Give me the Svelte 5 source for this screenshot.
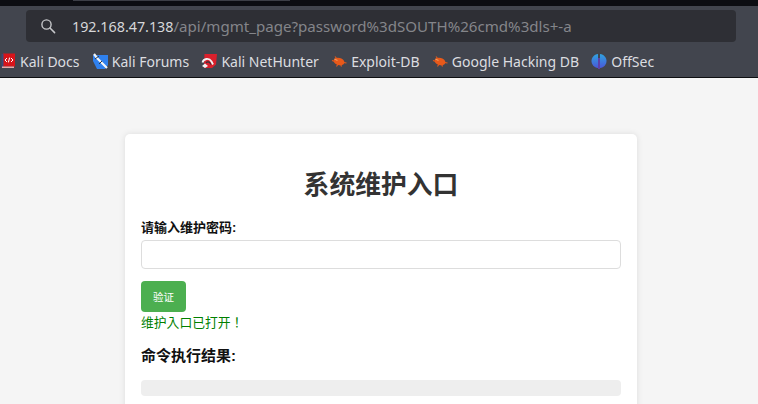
<script>
  const bookmarks = [
    { name: 'Kali Docs', icon: 'docs' },
    { name: 'Kali Forums', icon: 'forums' },
    { name: 'Kali NetHunter', icon: 'hunter' },
    { name: 'Exploit-DB', icon: 'bug' },
    { name: 'Google Hacking DB', icon: 'bug' },
    { name: 'OffSec', icon: 'offsec' }
  ]
</script>

<div class="browser">
  <div class="tabstrip"><div class="tab-edge"></div></div>
  <div class="toolbar">
    <div class="urlbar">
      <svg class="search" viewBox="0 0 16 16" width="16" height="16">
        <circle cx="6.5" cy="6.5" r="4.6" fill="none" stroke="#c6c7ca" stroke-width="1.4" />
        <path d="M10 10l4.6 4.6" stroke="#c6c7ca" stroke-width="1.5" stroke-linecap="round" />
      </svg>
      <span class="url"><span class="host">192.168.47.138</span>/api/mgmt_page?password%3dSOUTH%26cmd%3dls+-a</span>
    </div>
    <div class="bookmarks">
      {#each bookmarks as b}
        <div class="bookmark">
          {#if b.icon === 'docs'}
            <svg viewBox="0 0 16 16" width="16" height="16">
              <rect x="3" y="0.5" width="12" height="13" fill="#d8141a" />
              <rect x="1.5" y="1" width="2" height="14" fill="#3a4a78" />
              <rect x="2" y="13.500" width="12" height="1.500" fill="#e9a9a9" />
              <path d="M7 5L5 7l2 2M11 5l2 2-2 2M9.600 4.600L8.400 9.400" fill="none" stroke="#fff" stroke-width="1" />
            </svg>
          {:else if b.icon === 'forums'}
            <svg viewBox="0 0 16 16" width="16" height="16">
              <path d="M1 2h15v10l-3 4H5L1 8z" fill="#2f80ed" />
              <path d="M2 1l3 4 4 4 6 6" fill="none" stroke="#f2f4f7" stroke-width="2.200" />
              <path d="M3 6l4-3M7 11l3-3" stroke="#30343c" stroke-width="1" />
            </svg>
          {:else if b.icon === 'hunter'}
            <svg viewBox="0 0 16 16" width="16" height="16">
              <path d="M3.500 1h12.500l-1 10.500-4 3.500H3z" fill="#d9202c" />
              <path d="M1.500 9.500C2.500 5.500 8 4.500 10.500 8.500l1.500 3" fill="none" stroke="#f2f2f2" stroke-width="1.800" />
              <path d="M1 13l3-2.500 3 2.500-3 2z" fill="#f2f2f2" />
              <path d="M5 10c1-1.500 3-1.500 4 0l1 1.500" fill="none" stroke="#30343c" stroke-width="1.200" />
            </svg>
          {:else if b.icon === 'bug'}
            <svg viewBox="0 0 16 16" width="16" height="16">
              <ellipse cx="8" cy="8.500" rx="5.500" ry="3.700" fill="#e8591a" transform="rotate(15 8 8.500)" />
              <path d="M1 7.500l3 1M4 3.500l2.500 3M5.500 13.500l1.500-2.500M10.500 13.500l-1-2.500M15.500 10l-3-.5" stroke="#e8591a" stroke-width="1.100" />
              <path d="M3.500 6l3 1.500" stroke="#f49a5a" stroke-width="1.200" />
            </svg>
          {:else}
            <svg viewBox="0 0 16 16" width="16" height="16">
              <defs>
                <linearGradient id="offsec-fill" x1="0" y1="0" x2="0" y2="1">
                  <stop offset="0" stop-color="#2fa3e0" />
                  <stop offset="1" stop-color="#4a58d8" />
                </linearGradient>
              </defs>
              <path d="M7 1C3 1.500.5 4.500.5 8s2.500 6.500 6.500 7z" fill="url(#offsec-fill)" />
              <path d="M9 1c4 .5 6.500 3.500 6.500 7s-2.500 6.500-6.500 7z" fill="url(#offsec-fill)" />
              <path d="M8 5v11" stroke="#6a3fd0" stroke-width="1.400" />
            </svg>
          {/if}
          <span>{b.name}</span>
        </div>
      {/each}
    </div>
  </div>

  <main class="page">
    <section class="card">
      <h1>系统维护入口</h1>
      <label for="pw">请输入维护密码:</label>
      <input id="pw" type="password" />
      <button>验证</button>
      <p class="ok">维护入口已打开！</p>
      <h3>命令执行结果:</h3>
      <pre></pre>
    </section>
  </main>
</div>

<style>
  :global(body) {
    margin: 0;
    overflow: hidden;
    background: #f5f5f5;
  }

  .browser {
    height: 404px;
    display: flex;
    flex-direction: column;
    overflow: hidden;
    font-family: "Liberation Sans", "Noto Sans CJK SC", sans-serif;
  }

  .tabstrip {
    height: 6px;
    background: #0c0d12;
    flex-shrink: 0;
  }

  .tab-edge {
    width: 217px;
    height: 1px;
    margin-left: 73px;
    background: #3c3e46;
  }

  .toolbar {
    height: 72px;
    flex-shrink: 0;
    box-sizing: border-box;
    padding-top: 4px;
    background: #42454e;
    border-bottom: 1px solid #0e0f12;
  }

  .urlbar {
    height: 32px;
    margin: 0 22px 0 26px;
    padding-left: 14px;
    display: flex;
    align-items: center;
    gap: 16px;
    background: #2e2f35;
    border-radius: 4px;
  }

  .url {
    font-family: "Noto Sans", sans-serif;
    font-size: 15.100px;
    color: #84858a;
    white-space: nowrap;
  }

  .host {
    font-size: 14.300px;
    color: #d6d7d9;
  }

  .bookmarks {
    display: flex;
    gap: 12.300px;
    margin-top: 3px;
    height: 32px;
    align-items: center;
  }

  .bookmark {
    display: flex;
    align-items: center;
    gap: 4px;
    font-family: "Noto Sans", sans-serif;
    font-size: 14px;
    color: #dcdde0;
    white-space: nowrap;
  }

  .page {
    flex: 1;
    background: #f5f5f5;
    padding-top: 56px;
  }

  .card {
    box-sizing: border-box;
    width: 512px;
    margin-left: 125px;
    padding: 16px;
    background: #fff;
    border-radius: 5px;
    box-shadow: 0 0 6px rgba(0, 0, 0, 0.1);
  }

  h1 {
    margin: 18px 0;
    font-size: 25.800px;
    line-height: 34px;
    font-weight: 700;
    text-align: center;
    color: #333;
  }

  label {
    display: block;
    font-size: 13px;
    line-height: 16px;
    font-weight: 700;
    color: #111;
    margin-bottom: 4px;
  }

  input {
    display: block;
    box-sizing: border-box;
    width: 100%;
    height: 29px;
    border: 1px solid #ddd;
    border-radius: 4px;
    background: #fff;
  }

  button {
    display: block;
    width: 45px;
    height: 31px;
    margin-top: 12px;
    padding: 0;
    border: 0;
    border-radius: 4px;
    background: #4caf50;
    color: #fff;
    font-family: inherit;
    font-size: 10.500px;
  }

  .ok {
    margin: 2px 0 0;
    font-family: "Noto Sans CJK JP", sans-serif;
    font-size: 12.800px;
    line-height: 16px;
    color: #008000;
  }

  h3 {
    margin: 16px 0 14px;
    font-size: 15px;
    line-height: 20px;
    font-weight: 700;
    color: #111;
  }

  pre {
    margin: 0;
    height: 16px;
    background: #eee;
    border-radius: 4px;
  }
</style>
